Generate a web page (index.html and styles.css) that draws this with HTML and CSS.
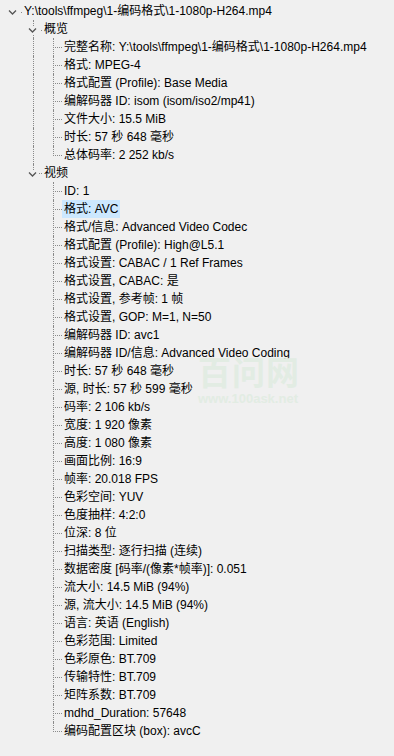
FILE: index.html
```html
<!DOCTYPE html>
<html lang="zh">
<head>
<meta charset="utf-8">
<title>MediaInfo</title>
<link rel="stylesheet" href="styles.css">
</head>
<body>
<div class="tree">
  <div class="row">
    <span class="cell"><svg class="chev" width="11" height="18" viewBox="0 0 11 18"><rect x="0" y="6" width="11" height="8" fill="#f0f0f0"/><polyline points="2,8.5 5.5,12 9,8.5" fill="none" stroke="#555" stroke-width="1.3"/></svg><span class="dot"></span></span>
    <span class="txt">Y:\tools\ffmpeg\1-编码格式\1-1080p-H264.mp4</span>
  </div>

  <div class="row">
    <span class="cell"></span>
    <span class="cell"><span class="v"></span><svg class="chev" width="11" height="18" viewBox="0 0 11 18"><rect x="0" y="6" width="11" height="8" fill="#f0f0f0"/><polyline points="2,8.5 5.5,12 9,8.5" fill="none" stroke="#555" stroke-width="1.3"/></svg><span class="dot"></span></span>
    <span class="txt">概览</span>
  </div>
  <div class="row"><span class="cell"></span><span class="cell"><span class="v"></span></span><span class="cell"><span class="v"><span class="h"></span></span></span><span class="txt">完整名称: Y:\tools\ffmpeg\1-编码格式\1-1080p-H264.mp4</span></div>
  <div class="row"><span class="cell"></span><span class="cell"><span class="v"></span></span><span class="cell"><span class="v"><span class="h"></span></span></span><span class="txt">格式: MPEG-4</span></div>
  <div class="row"><span class="cell"></span><span class="cell"><span class="v"></span></span><span class="cell"><span class="v"><span class="h"></span></span></span><span class="txt">格式配置 (Profile): Base Media</span></div>
  <div class="row"><span class="cell"></span><span class="cell"><span class="v"></span></span><span class="cell"><span class="v"><span class="h"></span></span></span><span class="txt">编解码器 ID: isom (isom/iso2/mp41)</span></div>
  <div class="row"><span class="cell"></span><span class="cell"><span class="v"></span></span><span class="cell"><span class="v"><span class="h"></span></span></span><span class="txt">文件大小: 15.5 MiB</span></div>
  <div class="row"><span class="cell"></span><span class="cell"><span class="v"></span></span><span class="cell"><span class="v"><span class="h"></span></span></span><span class="txt">时长: 57 秒 648 毫秒</span></div>
  <div class="row"><span class="cell"></span><span class="cell"><span class="v"></span></span><span class="cell"><span class="l"></span></span><span class="txt">总体码率: 2 252 kb/s</span></div>

  <div class="row">
    <span class="cell"></span>
    <span class="cell"><span class="l"></span><svg class="chev" width="11" height="18" viewBox="0 0 11 18"><rect x="0" y="6" width="11" height="8" fill="#f0f0f0"/><polyline points="2,8.5 5.5,12 9,8.5" fill="none" stroke="#555" stroke-width="1.3"/></svg></span>
    <span class="txt">视频</span>
  </div>
  <div class="row"><span class="cell"></span><span class="cell"></span><span class="cell"><span class="v"><span class="h"></span></span></span><span class="txt">ID: 1</span></div>
  <div class="row"><span class="cell"></span><span class="cell"></span><span class="cell"><span class="v"><span class="h"></span></span></span><span class="txt sel">格式: AVC</span></div>
  <div class="row"><span class="cell"></span><span class="cell"></span><span class="cell"><span class="v"><span class="h"></span></span></span><span class="txt">格式/信息: Advanced Video Codec</span></div>
  <div class="row"><span class="cell"></span><span class="cell"></span><span class="cell"><span class="v"><span class="h"></span></span></span><span class="txt">格式配置 (Profile): High@L5.1</span></div>
  <div class="row"><span class="cell"></span><span class="cell"></span><span class="cell"><span class="v"><span class="h"></span></span></span><span class="txt">格式设置: CABAC / 1 Ref Frames</span></div>
  <div class="row"><span class="cell"></span><span class="cell"></span><span class="cell"><span class="v"><span class="h"></span></span></span><span class="txt">格式设置, CABAC: 是</span></div>
  <div class="row"><span class="cell"></span><span class="cell"></span><span class="cell"><span class="v"><span class="h"></span></span></span><span class="txt">格式设置, 参考帧: 1 帧</span></div>
  <div class="row"><span class="cell"></span><span class="cell"></span><span class="cell"><span class="v"><span class="h"></span></span></span><span class="txt">格式设置, GOP: M=1, N=50</span></div>
  <div class="row"><span class="cell"></span><span class="cell"></span><span class="cell"><span class="v"><span class="h"></span></span></span><span class="txt">编解码器 ID: avc1</span></div>
  <div class="row"><span class="cell"></span><span class="cell"></span><span class="cell"><span class="v"><span class="h"></span></span></span><span class="txt">编解码器 ID/信息: Advanced Video Coding</span></div>
  <div class="row"><span class="cell"></span><span class="cell"></span><span class="cell"><span class="v"><span class="h"></span></span></span><span class="txt">时长: 57 秒 648 毫秒</span></div>
  <div class="row"><span class="cell"></span><span class="cell"></span><span class="cell"><span class="v"><span class="h"></span></span></span><span class="txt">源, 时长: 57 秒 599 毫秒</span></div>
  <div class="row"><span class="cell"></span><span class="cell"></span><span class="cell"><span class="v"><span class="h"></span></span></span><span class="txt">码率: 2 106 kb/s</span></div>
  <div class="row"><span class="cell"></span><span class="cell"></span><span class="cell"><span class="v"><span class="h"></span></span></span><span class="txt">宽度: 1 920 像素</span></div>
  <div class="row"><span class="cell"></span><span class="cell"></span><span class="cell"><span class="v"><span class="h"></span></span></span><span class="txt">高度: 1 080 像素</span></div>
  <div class="row"><span class="cell"></span><span class="cell"></span><span class="cell"><span class="v"><span class="h"></span></span></span><span class="txt">画面比例: 16:9</span></div>
  <div class="row"><span class="cell"></span><span class="cell"></span><span class="cell"><span class="v"><span class="h"></span></span></span><span class="txt">帧率: 20.018 FPS</span></div>
  <div class="row"><span class="cell"></span><span class="cell"></span><span class="cell"><span class="v"><span class="h"></span></span></span><span class="txt">色彩空间: YUV</span></div>
  <div class="row"><span class="cell"></span><span class="cell"></span><span class="cell"><span class="v"><span class="h"></span></span></span><span class="txt">色度抽样: 4:2:0</span></div>
  <div class="row"><span class="cell"></span><span class="cell"></span><span class="cell"><span class="v"><span class="h"></span></span></span><span class="txt">位深: 8 位</span></div>
  <div class="row"><span class="cell"></span><span class="cell"></span><span class="cell"><span class="v"><span class="h"></span></span></span><span class="txt">扫描类型: 逐行扫描 (连续)</span></div>
  <div class="row"><span class="cell"></span><span class="cell"></span><span class="cell"><span class="v"><span class="h"></span></span></span><span class="txt">数据密度 [码率/(像素*帧率)]: 0.051</span></div>
  <div class="row"><span class="cell"></span><span class="cell"></span><span class="cell"><span class="v"><span class="h"></span></span></span><span class="txt">流大小: 14.5 MiB (94%)</span></div>
  <div class="row"><span class="cell"></span><span class="cell"></span><span class="cell"><span class="v"><span class="h"></span></span></span><span class="txt">源, 流大小: 14.5 MiB (94%)</span></div>
  <div class="row"><span class="cell"></span><span class="cell"></span><span class="cell"><span class="v"><span class="h"></span></span></span><span class="txt">语言: 英语 (English)</span></div>
  <div class="row"><span class="cell"></span><span class="cell"></span><span class="cell"><span class="v"><span class="h"></span></span></span><span class="txt">色彩范围: Limited</span></div>
  <div class="row"><span class="cell"></span><span class="cell"></span><span class="cell"><span class="v"><span class="h"></span></span></span><span class="txt">色彩原色: BT.709</span></div>
  <div class="row"><span class="cell"></span><span class="cell"></span><span class="cell"><span class="v"><span class="h"></span></span></span><span class="txt">传输特性: BT.709</span></div>
  <div class="row"><span class="cell"></span><span class="cell"></span><span class="cell"><span class="v"><span class="h"></span></span></span><span class="txt">矩阵系数: BT.709</span></div>
  <div class="row"><span class="cell"></span><span class="cell"></span><span class="cell"><span class="v"><span class="h"></span></span></span><span class="txt">mdhd_Duration: 57648</span></div>
  <div class="row"><span class="cell"></span><span class="cell"></span><span class="cell"><span class="l"></span></span><span class="txt">编码配置区块 (box): avcC</span></div>
</div>
<div class="wm">
  <div class="wm-big">百问网</div>
  <div class="wm-small">www.100ask.net</div>
</div>
</body>
</html>
```

FILE: styles.css
```css
html, body {
  margin: 0;
  padding: 0;
  background: #f0f0f0;
}
body {
  width: 394px;
  height: 756px;
  overflow: hidden;
  position: relative;
  font-family: "Liberation Sans", Arial, "Noto Sans CJK SC", sans-serif;
  font-size: 12px;
  color: #000;
}
.tree {
  display: flex;
  flex-direction: column;
  padding: 2px 0 0 2px;
}
.row {
  display: flex;
  height: 18px;
  align-items: stretch;
}
.cell {
  flex: none;
  width: 20px;
  height: 18px;
  display: grid;
}
.cell > * {
  grid-area: 1 / 1;
}
.v {
  margin-left: 11px;
  width: 9px;
  height: 18px;
  border-left: 1px dotted #8a8a8a;
}
.h {
  display: block;
  width: 7px;
  height: 9px;
  margin-left: 1px;
  border-bottom: 1px dotted #8a8a8a;
}
.l {
  margin-left: 11px;
  width: 8px;
  height: 9px;
  border-left: 1px dotted #8a8a8a;
  border-bottom: 1px dotted #8a8a8a;
  align-self: start;
}
.chev {
  margin-left: 5px;
  align-self: start;
}
.dot {
  margin-left: 19px;
  margin-top: 10px;
  width: 1px;
  height: 1px;
  background: #8a8a8a;
  align-self: start;
}
.txt {
  padding: 0 2px;
  line-height: 18px;
  white-space: nowrap;
}
.sel {
  background: #cce8ff;
}
.wm {
  position: absolute;
  left: 198px;
  top: 354px;
  color: #e2ece3;
  display: flex;
  flex-direction: column;
  align-items: flex-start;
  pointer-events: none;
}
.wm-big {
  font-family: "Noto Sans CJK SC", sans-serif;
  font-size: 33px;
  font-weight: bold;
  line-height: 34px;
  letter-spacing: 1px;
}
.wm-small {
  font-family: "Liberation Sans", Arial, sans-serif;
  font-size: 13px;
  font-weight: bold;
  line-height: 14px;
  margin-top: 4px;
}
```
